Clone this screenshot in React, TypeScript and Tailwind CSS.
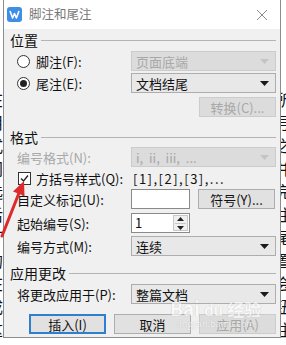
import React from 'react'

const font = { fontFamily: '"Noto Sans CJK SC", "Noto Sans", sans-serif' }

function Arrow({ disabled }: { disabled?: boolean }) {
    return (
        <svg width="9" height="5" viewBox="0 0 9 5" className="shrink-0">
            <path d="M0 0 L9 0 L4.5 5 Z" fill={disabled ? '#c4c4c4' : '#1a1a1a'} />
        </svg>
    )
}

function Select({ value, disabled }: { value: string, disabled?: boolean }) {
    return (
        <div className={'w-[145px] h-[20px] flex items-center justify-between pl-[4px] pr-[6px] border ' +
            (disabled ? 'bg-[#dcdcdc] border-[#cccccc] text-[#a8a8a8]' : 'bg-[#e8e8e8] border-[#adadad] text-[#111]')}>
            <span className="text-[13px] leading-none whitespace-pre">{value}</span>
            <Arrow disabled={disabled} />
        </div>
    )
}

function Btn({ label, disabled, focus, w = 'w-[77px]' }: { label: string, disabled?: boolean, focus?: boolean, w?: string }) {
    return (
        <div className={w + ' h-[20px] flex items-center justify-center text-[13px] leading-none ' +
            (focus ? 'border-2 border-[#2f7fd0] bg-[#e1e1e1] text-[#111]' :
                disabled ? 'border border-[#cccccc] bg-[#dcdcdc] text-[#a8a8a8]' : 'border border-[#adadad] bg-[#e1e1e1] text-[#111]')}>
            {label}
        </div>
    )
}

function Heading({ text, className = '' }: { text: string, className?: string }) {
    return (
        <div className={'flex items-center h-[18px] ' + className}>
            <span className="text-[14px] leading-none text-[#111]">{text}</span>
            <div className="flex-1 ml-[3px] h-px bg-[#b4b4b4]" />
        </div>
    )
}

function Row({ label, children, className = '', muted }: { label: React.ReactNode, children?: React.ReactNode, className?: string, muted?: boolean }) {
    return (
        <div className={'flex items-center h-[20px] ' + className}>
            <div className={'w-[121px] pl-[7px] text-[13px] leading-none ' + (muted ? 'text-[#a8a8a8]' : 'text-[#111]')}>{label}</div>
            {children}
        </div>
    )
}

function Radio({ checked }: { checked?: boolean }) {
    return (
        <span className="w-[13px] h-[13px] rounded-full border border-[#333] bg-white flex items-center justify-center mr-[6px]">
            {checked && <span className="w-[7px] h-[7px] rounded-full bg-[#222]" />}
        </span>
    )
}

const docLines = [
    '在文档中插入脚注和尾注的方法介绍如下所示',
    '用户可以根据需要设置编号格式以及方括号样',
    '式，插入后的编号会自动连续显示在文档之中',
    '同时也可以设置自定义标记和起始编号，并且',
    '选择将更改应用于整篇文档或者本节中，完成',
    '后点击插入按钮即可生成对应的脚注和尾注。',
    '打开软件后点击引用选项卡，找到脚注和尾注',
    '的对话框启动器，在弹出的窗口中进行设置，',
    '在格式区域勾选方括号样式，这样编号就会变',
    '成方括号的样式，设置完成后点击插入按钮，',
    '这时在文档中就可以看到方括号样式的尾注了',
]

export default function App() {
    return (
        <div className="relative w-[286px] h-[345px] overflow-hidden bg-white" style={font}>
            {/* document behind */}
            <div className="absolute left-[-13px] top-[88px] w-[320px] text-[16px] leading-[23px] text-[#111] whitespace-nowrap">
                {docLines.map((l, i) => <div key={i}>{l}</div>)}
            </div>

            {/* dialog */}
            <div className="absolute left-[3px] top-0 w-[278px] h-[338px] border border-[#8c8c8c] border-t-0 bg-[#f0f0f0] flex flex-col">
                <div className="h-[29px] bg-white flex items-center pl-[3px] pr-[12px] shrink-0">
                    <svg width="15" height="15" viewBox="0 0 15 15" className="mr-[7px]">
                        <rect width="15" height="15" rx="3" fill="#3c8ee6" />
                        <path d="M3 4 L5.6 11 L7.5 6.5 L9.4 11 L12 4" stroke="#fff" strokeWidth="1.6" fill="none" strokeLinejoin="round" />
                    </svg>
                    <span className="text-[12.5px] text-[#777] leading-none">脚注和尾注</span>
                    <div className="flex-1" />
                    <svg width="12" height="12" viewBox="0 0 12 12">
                        <path d="M1 1 L11 11 M11 1 L1 11" stroke="#8a8a8a" strokeWidth="1" />
                    </svg>
                </div>

                <div className="flex flex-col pl-[6px] pr-[4px]">
                    <Heading text="位置" className="mt-[2px]" />
                    <Row className="mt-[2px]" label={<span className="flex items-center"><Radio />脚注(F):</span>}>
                        <Select value="页面底端" disabled />
                    </Row>
                    <Row className="mt-[2px]" label={<span className="flex items-center"><Radio checked />尾注(E):</span>}>
                        <Select value="文档结尾" />
                    </Row>
                    <div className="flex justify-end mt-[4px]">
                        <Btn label="转换(C)..." disabled />
                    </div>

                    <Heading text="格式" className="mt-[11px]" />
                    <Row className="mt-px" label="编号格式(N):" muted>
                        <Select value="i,  ii,  iii,  ..." disabled />
                    </Row>
                    <div className="flex items-center h-[20px] mt-px">
                        <div className="w-[121px] pl-[8px] flex items-center text-[13px] leading-none text-[#111]">
                            <span className="w-[13px] h-[13px] border border-[#333] bg-white flex items-center justify-center mr-[5px]">
                                <svg width="9" height="9" viewBox="0 0 9 9"><path d="M1 4.5 L3.5 7 L8 1.5" stroke="#222" strokeWidth="1.3" fill="none" /></svg>
                            </span>
                            方括号样式(Q):
                        </div>
                        <span className="ml-[2px] text-[13px] leading-none text-[#111] tracking-[1.5px]">[1],[2],[3],...</span>
                    </div>
                    <Row className="mt-px" label="自定义标记(U):">
                        <div className="w-[59px] h-[20px] bg-white border border-[#8a8a8a]" />
                        <div className="ml-[8px]"><Btn label="符号(Y)..." /></div>
                    </Row>
                    <Row className="mt-[4px]" label="起始编号(S):">
                        <div className="w-[59px] h-[20px] bg-white border border-[#8a8a8a] flex">
                            <span className="flex-1 pl-[3px] text-[13px] leading-[18px] text-[#111]">1</span>
                            <div className="w-[15px] my-px mr-px border border-[#c8c8c8] bg-[#f0f0f0] flex flex-col items-center justify-center gap-[2px]">
                                <svg width="7" height="4" viewBox="0 0 7 4"><path d="M0 4 L7 4 L3.5 0 Z" fill="#222" /></svg>
                                <div className="w-[11px] h-px bg-[#c8c8c8]" />
                                <svg width="7" height="4" viewBox="0 0 7 4"><path d="M0 0 L7 0 L3.5 4 Z" fill="#222" /></svg>
                            </div>
                        </div>
                    </Row>
                    <Row className="mt-[3px]" label="编号方式(M):">
                        <Select value="连续" />
                    </Row>

                    <Heading text="应用更改" className="mt-[8px]" />
                    <Row className="mt-[2px]" label="将更改应用于(P):">
                        <Select value="整篇文档" />
                    </Row>
                    <div className="flex justify-end gap-[8px] mt-[10px]">
                        <Btn label="插入(I)" focus />
                        <Btn label="取消" />
                        <Btn label="应用(A)" disabled />
                    </div>
                </div>
            </div>

            {/* watermark */}
            <div className="absolute left-[170px] top-[298px] flex flex-col items-center pointer-events-none opacity-60">
                <div className="flex items-end text-white text-[19px] font-bold leading-none" style={{ textShadow: '0 0 1px #9a9a9a' }}>
                    <span>Bai</span>
                    <span className="mx-[2px] text-[15px] rounded-full px-[2px]">du</span>
                    <span className="text-[17px]">经验</span>
                </div>
                <span className="text-[9px] text-white leading-none mt-[2px]" style={{ textShadow: '0 0 1px #9a9a9a' }}>jingyan.baidu.com</span>
            </div>

            {/* red arrow */}
            <svg className="absolute left-0 top-0 pointer-events-none" width="40" height="245" viewBox="0 0 40 245">
                <path d="M2 236 L19 193" stroke="#dd2a2a" strokeWidth="3" strokeLinecap="round" />
                <path d="M24 181 L13 191.5 L24.5 196 Z" fill="#dd2a2a" />
            </svg>
        </div>
    )
}
